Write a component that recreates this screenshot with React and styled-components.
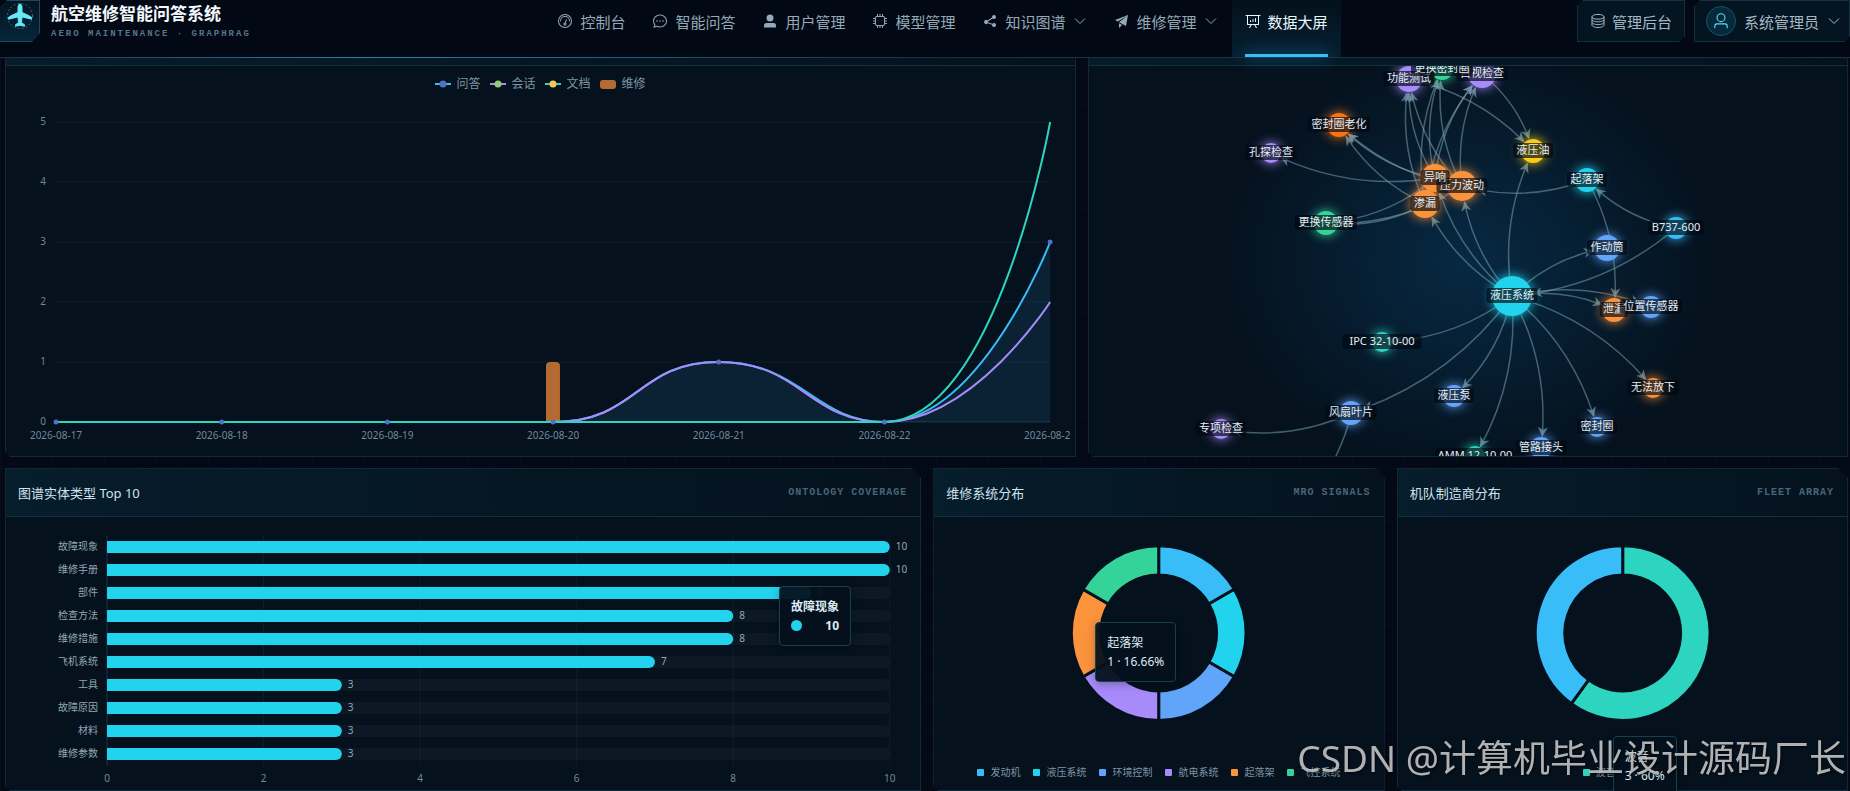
import React from "react";
import styled, { createGlobalStyle, css } from "styled-components";

const NAV = [
  { label: "控制台", icon: "odometer" },
  { label: "智能问答", icon: "chat" },
  { label: "用户管理", icon: "userFilled" },
  { label: "模型管理", icon: "cpu" },
  { label: "知识图谱", icon: "share", menu: true },
  { label: "维修管理", icon: "promotion", menu: true },
  { label: "数据大屏", icon: "board", active: true },
];

const ICONS = {
  odometer: [
    "M512 896a384 384 0 1 0 0-768 384 384 0 0 0 0 768m0 64a448 448 0 1 1 0-896 448 448 0 0 1 0 896",
    "M192 512a320 320 0 1 1 640 0 32 32 0 1 1-64 0 256 256 0 1 0-512 0 32 32 0 0 1-64 0",
    "M570.432 627.84A96 96 0 1 1 509.568 608l60.992-187.776A32 32 0 1 1 631.424 440l-60.992 187.776zM502.08 734.464a32 32 0 1 0 19.84-60.928 32 32 0 0 0-19.84 60.928",
  ],
  chat: [
    "m174.72 855.68 135.296-45.12 23.68 11.84C388.096 849.536 448.576 864 512 864c211.84 0 384-166.784 384-352S723.84 160 512 160 128 326.784 128 512c0 69.12 24.96 139.264 70.848 199.232l22.08 28.8-46.272 115.584zm-45.248 82.56A32 32 0 0 1 89.6 896l58.368-145.92C94.72 680.32 64 596.864 64 512 64 299.904 256 96 512 96s448 203.904 448 416-192 416-448 416a461.056 461.056 0 0 1-206.912-48.384l-175.616 58.56z",
    "M512 563.2a51.2 51.2 0 1 1 0-102.4 51.2 51.2 0 0 1 0 102.4m192 0a51.2 51.2 0 1 1 0-102.4 51.2 51.2 0 0 1 0 102.4m-384 0a51.2 51.2 0 1 1 0-102.4 51.2 51.2 0 0 1 0 102.4",
  ],
  userFilled: [
    "M288 320a224 224 0 1 0 448 0 224 224 0 1 0-448 0m544 608H160a32 32 0 0 1-32-32v-96a160 160 0 0 1 160-160h448a160 160 0 0 1 160 160v96a32 32 0 0 1-32 32z",
  ],
  cpu: [
    "M320 256a64 64 0 0 0-64 64v384a64 64 0 0 0 64 64h384a64 64 0 0 0 64-64V320a64 64 0 0 0-64-64zm0-64h384a128 128 0 0 1 128 128v384a128 128 0 0 1-128 128H320a128 128 0 0 1-128-128V320a128 128 0 0 1 128-128",
    "M480 64h64v160h-64zM640 64h64v160h-64zM320 64h64v160h-64zM480 800h64v160h-64zM640 800h64v160h-64zM320 800h64v160h-64zM64 480h160v64H64zM64 320h160v64H64zM64 640h160v64H64zM800 480h160v64H800zM800 320h160v64H800zM800 640h160v64H800z",
  ],
  share: [
    "m679.872 348.8-301.76 188.608a127.808 127.808 0 0 1 5.12 52.16l279.936 104.96a128 128 0 1 1-22.464 59.904l-279.872-104.96a128 128 0 1 1-16.64-166.272l301.696-188.608a128 128 0 1 1 33.92 54.272z",
  ],
  promotion: [
    "m64 448 832-320-128 704-446.08-243.328L832 192 242.816 545.536zm256 512V657.024L512 768z",
  ],
  board: [
    "m665.216 768 110.848 192h-73.856L591.36 768H433.024L322.176 960H248.32l110.848-192H160a32 32 0 0 1-32-32V192H64a32 32 0 0 1 0-64h896a32 32 0 1 1 0 64h-64v544a32 32 0 0 1-32 32zM832 192H192v512h640zM352 448a32 32 0 0 1 32 32v64a32 32 0 0 1-64 0v-64a32 32 0 0 1 32-32m160-64a32 32 0 0 1 32 32v128a32 32 0 0 1-64 0V416a32 32 0 0 1 32-32m160-64a32 32 0 0 1 32 32v192a32 32 0 1 1-64 0V352a32 32 0 0 1 32-32",
  ],
  user: [
    "M512 512a192 192 0 1 0 0-384 192 192 0 0 0 0 384m0 64a256 256 0 1 1 0-512 256 256 0 0 1 0 512m320 320v-96a96 96 0 0 0-96-96H288a96 96 0 0 0-96 96v96a32 32 0 1 1-64 0v-96a160 160 0 0 1 160-160h448a160 160 0 0 1 160 160v96a32 32 0 1 1-64 0",
  ],
};

const DATES = [
  "2026-08-17",
  "2026-08-18",
  "2026-08-19",
  "2026-08-20",
  "2026-08-21",
  "2026-08-22",
  "2026-08-23",
];

const SERIES = [
  { name: "问答", color: "#38bdf8", dot: "#5470c6", data: [0, 0, 0, 0, 1, 0, 3] },
  { name: "会话", color: "#a78bfa", dot: "#91cc75", data: [0, 0, 0, 0, 1, 0, 2] },
  { name: "文档", color: "#2dd4bf", dot: "#fac858", data: [0, 0, 0, 0, 0, 0, 5] },
];

const ENTITIES = [
  ["故障现象", 10],
  ["维修手册", 10],
  ["部件", 9],
  ["检查方法", 8],
  ["维修措施", 8],
  ["飞机系统", 7],
  ["工具", 3],
  ["故障原因", 3],
  ["材料", 3],
  ["维修参数", 3],
];

const SYSTEMS = [
  { name: "发动机", value: 1, color: "#38bdf8" },
  { name: "液压系统", value: 1, color: "#22d3ee" },
  { name: "环境控制", value: 1, color: "#60a5fa" },
  { name: "航电系统", value: 1, color: "#a78bfa" },
  { name: "起落架", value: 1, color: "#fb923c" },
  { name: "飞控系统", value: 1, color: "#34d399" },
];

const MAKERS = [
  { name: "波音", value: 3, color: "#2dd4bf" },
  { name: "空客", value: 2, color: "#38bdf8" },
];

// id: [label, x, y, radius, color]
const NODES = {
  test: ["功能测试", 1409, 79, 13, "#a78bfa"],
  visual: ["目视检查", 1482, 74, 14, "#a78bfa"],
  seal: ["更换密封圈", 1442, 69, 11, "#34d399"],
  aging: ["密封圈老化", 1339, 125, 12, "#f97316"],
  bore: ["孔探检查", 1271, 153, 10, "#a78bfa"],
  pressure: ["压力波动", 1462, 186, 15, "#fb923c"],
  noise: ["异响", 1435, 178, 14, "#fb923c"],
  leak: ["渗漏", 1425, 204, 14, "#fb923c"],
  sensor: ["更换传感器", 1326, 223, 12, "#34d399"],
  oil: ["液压油", 1533, 151, 12, "#facc15"],
  gear: ["起落架", 1587, 180, 12, "#22d3ee"],
  b737: ["B737-600", 1676, 228, 11, "#38bdf8"],
  actuator: ["作动筒", 1607, 248, 13, "#60a5fa"],
  hub: ["液压系统", 1512, 296, 20, "#22d3ee"],
  seep: ["泄漏", 1614, 310, 12, "#fb923c"],
  position: ["位置传感器", 1651, 307, 11, "#60a5fa"],
  stuck: ["无法放下", 1653, 388, 10, "#fb923c"],
  ring: ["密封圈", 1597, 427, 10, "#60a5fa"],
  pipe: ["管路接头", 1541, 448, 11, "#60a5fa"],
  amm: ["AMM 12-10-00", 1475, 456, 10, "#2dd4bf"],
  pump: ["液压泵", 1454, 396, 11, "#60a5fa"],
  ipc: ["IPC 32-10-00", 1382, 342, 10, "#2dd4bf"],
  fan: ["风扇叶片", 1351, 413, 12, "#60a5fa"],
  special: ["专项检查", 1221, 429, 10, "#a78bfa"],
};

const EDGES = [
  ["hub", "oil"],
  ["hub", "actuator"],
  ["hub", "seep"],
  ["hub", "position"],
  ["hub", "stuck"],
  ["hub", "ring"],
  ["hub", "pipe"],
  ["hub", "amm"],
  ["hub", "pump"],
  ["hub", "ipc"],
  ["hub", "fan"],
  ["hub", "pressure"],
  ["hub", "leak"],
  ["hub", "noise"],
  ["b737", "hub"],
  ["b737", "gear"],
  ["gear", "seep"],
  ["gear", "pressure"],
  ["fan", "special"],
  ["noise", "bore"],
  ["noise", "aging"],
  ["pressure", "aging"],
  ["leak", "aging"],
  ["noise", "sensor"],
  ["pressure", "sensor"],
  ["leak", "sensor"],
  ["noise", "test"],
  ["pressure", "test"],
  ["leak", "test"],
  ["noise", "seal"],
  ["pressure", "seal"],
  ["leak", "seal"],
  ["noise", "visual"],
  ["pressure", "visual"],
  ["leak", "visual"],
  ["test", "oil"],
  ["visual", "oil"],
];

const Icon = ({ name, size = 16 }) => (
  <svg width={size} height={size} viewBox="0 0 1024 1024" fill="currentColor" aria-hidden="true">
    {ICONS[name].map((d) => (
      <path key={d} d={d} />
    ))}
  </svg>
);

const Chevron = () => (
  <svg width="14" height="14" viewBox="0 0 14 14" fill="none" stroke="currentColor" aria-hidden="true">
    <path d="M2 4.5 7 9.5 12 4.5" />
  </svg>
);

const Coins = () => (
  <svg width="16" height="16" viewBox="0 0 16 16" fill="none" stroke="currentColor" aria-hidden="true">
    <ellipse cx="8" cy="3.8" rx="6" ry="2.4" />
    <path d="M2 3.8v2.6c0 1.3 2.7 2.4 6 2.4s6-1.1 6-2.4V3.8M2 6.6v2.6c0 1.3 2.7 2.4 6 2.4s6-1.1 6-2.4V6.6M2 9.4v2.7c0 1.3 2.7 2.4 6 2.4s6-1.1 6-2.4V9.4" />
  </svg>
);

const PlaneLogo = () => (
  <svg width="30" height="30" viewBox="0 0 30 30" aria-hidden="true">
    <circle cx="15" cy="15" r="12.5" fill="none" stroke="#2c7484" strokeDasharray="2 2" />
    <path
      fill="#67e8f9"
      stroke="#67e8f9"
      strokeLinejoin="round"
      d="M15 3c1.300 0 2 1.600 2 3.200v5.200l8.600 4.200c.6.300.9.800.9 1.400v1.200L17 15.900l-.5 5.800 3 2v1.500L15 24.300l-4.500.9v-1.500l3-2-.5-5.800-9.500 2.300V17c0-.6.3-1.100.9-1.400l8.600-4.200V6.200C13 4.600 13.700 3 15 3z"
    />
  </svg>
);

const LineChart = () => {
  const step = 165.7;
  const px = (i) => 50 + i * step;
  const py = (v) => 332 - v * 60;

  const curve = (data) => {
    const len = (i) => Math.hypot(step, (data[i + 1] - data[i]) * 60);
    const last = data.length - 1;
    let d = `M${px(0)} ${py(data[0])}`;
    for (let i = 0; i < last; i++) {
      const out = i === 0 ? 0 : (step * len(i)) / (len(i) + len(i - 1));
      const into = i + 1 === last ? 0 : (step * len(i)) / (len(i) + len(i + 1));
      d += `C${px(i) + out} ${py(data[i])} ${px(i + 1) - into} ${py(data[i + 1])} ${px(i + 1)} ${py(data[i + 1])}`;
    }
    return d;
  };

  return (
    <Chart viewBox="0 0 1064 366" role="img" aria-label="问答、会话、文档、维修趋势">
      {[0, 1, 2, 3, 4, 5].map((v) => (
        <g key={v}>
          <GridLine x1={px(0)} x2={px(6)} y1={py(v)} y2={py(v)} $strong={v === 0} />
          <AxisText x="40" y={py(v) + 3} textAnchor="end">
            {v}
          </AxisText>
        </g>
      ))}
      <path d={`${curve(SERIES[0].data)}V332H50Z`} fill="#38bdf8" fillOpacity="0.1" />
      <path d="M540 332V276a4 4 0 0 1 4-4h6a4 4 0 0 1 4 4v56z" fill="#b36a33" />
      {SERIES.map((s) => (
        <path key={s.name} d={curve(s.data)} fill="none" stroke={s.color} strokeWidth="2" />
      ))}
      {SERIES[0].data.map((v, i) => (
        <circle key={i} cx={px(i)} cy={py(v)} r="2.5" fill={SERIES[0].dot} />
      ))}
      {DATES.map((d, i) => (
        <AxisText key={d} x={px(i)} y="349" textAnchor="middle">
          {d}
        </AxisText>
      ))}
    </Chart>
  );
};

const BarChart = () => {
  const unit = 78.25;
  return (
    <Chart viewBox="0 0 914 273" role="img" aria-label="图谱实体类型数量">
      {[0, 2, 4, 6, 8, 10].map((v) => (
        <g key={v}>
          <GridLine x1={101 + v * unit} x2={101 + v * unit} y1="19" y2="249" $strong={v === 0} />
          <AxisText x={101 + v * unit} y="265" textAnchor="middle">
            {v}
          </AxisText>
        </g>
      ))}
      {ENTITIES.map(([name, value], i) => {
        const y = 24 + i * 23;
        const end = 101 + value * unit;
        return (
          <g key={name}>
            <rect x="101" y={y} width={unit * 10} height="12" rx="5" fill="#94a3b8" fillOpacity="0.05" />
            <path d={`M101 ${y}H${end - 6}a6 6 0 0 1 0 12H101z`} fill="#22d3ee" />
            <AxisText x="92" y={y + 9} textAnchor="end" $bright>
              {name}
            </AxisText>
            <AxisText x={end + 6} y={y + 9} $bright>
              {value}
            </AxisText>
          </g>
        );
      })}
    </Chart>
  );
};

const Donut = ({ data, label }) => {
  const total = data.reduce((sum, d) => sum + d.value, 0);
  const point = (r, a) => `${225 + r * Math.sin(a)} ${116 + -r * Math.cos(a)}`;
  let angle = 0;
  return (
    <DonutSvg viewBox="0 0 450 249" role="img" aria-label={label}>
      {data.map((d) => {
        const from = angle;
        angle += (d.value / total) * Math.PI * 2;
        const large = angle - from > Math.PI ? 1 : 0;
        return (
          <path
            key={d.name}
            d={`M${point(87.5, from)}A87.5 87.5 0 ${large} 1 ${point(87.5, angle)}L${point(58, angle)}A58 58 0 ${large} 0 ${point(58, from)}Z`}
            fill={d.color}
            stroke="#05111d"
            strokeWidth="3"
          />
        );
      })}
    </DonutSvg>
  );
};

// Trims the quadratic curve where it enters the target node.
const edgePath = ([a, b]) => {
  const [, x1, y1] = NODES[a];
  const [, x2, y2, r] = NODES[b];
  const cx = (x1 + x2) / 2 - (y1 - y2) * 0.16;
  const cy = (y1 + y2) / 2 - (x2 - x1) * 0.16;
  let t = 1;
  let x = x2;
  let y = y2;
  while (t > 0 && Math.hypot(x - x2, y - y2) < r + 1) {
    t -= 0.005;
    x = (1 - t) ** 2 * x1 + 2 * (1 - t) * t * cx + t * t * x2;
    y = (1 - t) ** 2 * y1 + 2 * (1 - t) * t * cy + t * t * y2;
  }
  return `M${x1} ${y1}Q${x1 + (cx - x1) * t} ${y1 + (cy - y1) * t} ${x} ${y}`;
};

const labelWidth = (text) => (/^[A-Z]/.test(text) ? text.length * 6 : text.length * 11) + 7;

const GraphChart = () => (
  <Chart viewBox="1089 66 758 390" role="img" aria-label="知识图谱关系">
    <defs>
      <radialGradient id="glow">
        <stop offset="0" stopColor="#0a4a78" stopOpacity="0.42" />
        <stop offset="1" stopColor="#0a4a78" stopOpacity="0" />
      </radialGradient>
      <marker id="arrow" viewBox="0 0 10 10" refX="9" refY="5" markerWidth="10" markerHeight="10" markerUnits="userSpaceOnUse" orient="auto">
        <path d="M0 0 10 5 0 10 3 5z" fill="#6f95a3" fillOpacity="0.75" />
      </marker>
    </defs>
    <ellipse cx="1468" cy="261" rx="250" ry="215" fill="url(#glow)" />
    <g fill="none" stroke="#7fa9b8" strokeOpacity="0.5" strokeWidth="1.5">
      {EDGES.map((edge) => (
        <path key={edge.join()} d={edgePath(edge)} markerEnd="url(#arrow)" />
      ))}
      <path d="M1351 413Q1347 434 1334 460" />
    </g>
    {Object.values(NODES).map(([name, x, y, r, color]) => (
      <GraphNode key={name} cx={x} cy={y} r={r} fill={color} $glow={color} />
    ))}
    {Object.values(NODES).map(([name, x, y]) => (
      <g key={name}>
        <rect x={x - labelWidth(name) / 2} y={y - 8} width={labelWidth(name)} height="15" rx="3" fill="#020812" fillOpacity="0.68" />
        <NodeText x={x} y={y + 3} textAnchor="middle">
          {name}
        </NodeText>
      </g>
    ))}
  </Chart>
);

const Panel = ({ title, tag, children }) => (
  <PanelBox>
    <PanelHead>
      <h2>{title}</h2>
      <span>{tag}</span>
    </PanelHead>
    {children}
  </PanelBox>
);

const App = () => {
  return (
    <>
      <GlobalStyle />
      <Header>
        <Brand href="#home">
          <LogoBox>
            <PlaneLogo />
          </LogoBox>
          <BrandText>
            <strong>航空维修智能问答系统</strong>
            <small>AERO MAINTENANCE · GRAPHRAG</small>
          </BrandText>
        </Brand>
        <Nav>
          {NAV.map((item) => (
            <NavLink key={item.label} href="#nav" $active={item.active}>
              <Icon name={item.icon} />
              {item.label}
              {item.menu && <Chevron />}
            </NavLink>
          ))}
        </Nav>
        <Actions>
          <HeaderButton type="button">
            <Coins />
            管理后台
          </HeaderButton>
          <HeaderButton type="button" $last>
            <Avatar>
              <Icon name="user" size={18} />
            </Avatar>
            系统管理员
            <Chevron />
          </HeaderButton>
        </Actions>
      </Header>

      <Main>
        <TopRow>
          <PanelBox>
            <HeadStrip />
            <Legend $top>
              {SERIES.map((s) => (
                <li key={s.name}>
                  <svg width="16" height="10" viewBox="0 0 16 10" aria-hidden="true">
                    <path d="M0 5h16" stroke={s.color} strokeWidth="2" />
                    <circle cx="8" cy="5" r="3.5" fill={s.dot} />
                  </svg>
                  {s.name}
                </li>
              ))}
              <li>
                <BarKey />
                维修
              </li>
            </Legend>
            <LineArea>
              <LineChart />
            </LineArea>
          </PanelBox>
          <PanelBox>
            <HeadStrip />
            <GraphChart />
          </PanelBox>
        </TopRow>

        <BottomRow>
          <Panel title="图谱实体类型 Top 10" tag="ONTOLOGY COVERAGE">
            <BarChart />
            <Tooltip $left="773px" $top="117px">
              <b>故障现象</b>
              <TipValue>
                <i />
                <strong>10</strong>
              </TipValue>
            </Tooltip>
          </Panel>
          <Panel title="维修系统分布" tag="MRO SIGNALS">
            <Donut data={SYSTEMS} label="维修系统分布" />
            <PieLegend data={SYSTEMS} />
            <Tooltip $left="161px" $top="153px">
              <span>起落架</span>
              <span>1 · 16.66%</span>
            </Tooltip>
          </Panel>
          <Panel title="机队制造商分布" tag="FLEET ARRAY">
            <Donut data={MAKERS} label="机队制造商分布" />
            <PieLegend data={MAKERS} />
            <Tooltip $left="215px" $top="267px">
              <span>波音</span>
              <span>3 · 60%</span>
            </Tooltip>
          </Panel>
        </BottomRow>
      </Main>
      <Watermark>CSDN @计算机毕业设计源码厂长</Watermark>
    </>
  );
};

const PieLegend = ({ data }) => (
  <Legend>
    {data.map((d) => (
      <li key={d.name}>
        <Swatch $color={d.color} />
        {d.name}
      </li>
    ))}
  </Legend>
);

const GlobalStyle = createGlobalStyle`
  * {
    box-sizing: border-box;
  }

  body {
    margin: 0;
    overflow: hidden;
    color: #d5e6f0;
    background-color: #030a16;
    background-image: linear-gradient(rgba(34, 150, 190, 0.03) 1px, transparent 1px),
      linear-gradient(90deg, rgba(34, 150, 190, 0.03) 1px, transparent 1px);
    background-size: 26px 26px;
    font-family: "Noto Sans", "Noto Sans CJK SC", sans-serif;
  }
`;

const Header = styled.header`
  position: relative;
  z-index: 2;
  display: flex;
  align-items: flex-start;
  height: 58px;
  background: #030914;
  border-bottom: 1px solid #173243;

  &::after {
    content: "";
    position: absolute;
    left: 0;
    bottom: -1px;
    width: 50%;
    height: 1px;
    background: linear-gradient(90deg, transparent, #2b7fae 40%, transparent);
  }
`;

const Brand = styled.a`
  display: flex;
  gap: 11px;
  min-width: 308px;
  color: inherit;
  text-decoration: none;
`;

const LogoBox = styled.span`
  display: flex;
  justify-content: center;
  width: 40px;
  height: 42px;
  border: 1px solid #1b4a5c;
  border-width: 1px 1px 1px 0;
  background: linear-gradient(180deg, #061521, #06263a);
  clip-path: polygon(7px 0, 100% 0, 100% 33px, 32px 100%, 0 100%, 0 7px);
`;

const BrandText = styled.span`
  display: flex;
  flex-direction: column;
  gap: 2px;
  padding-top: 2px;
  white-space: nowrap;

  strong {
    font-size: 17px;
    line-height: 24px;
    color: #f3faff;
  }

  small {
    font-family: "Liberation Mono", monospace;
    font-size: 9px;
    font-weight: 700;
    line-height: 12px;
    letter-spacing: 2px;
    color: #54758a;
  }
`;

const Nav = styled.nav`
  display: flex;
  flex: 1;
  justify-content: center;
  gap: 1px;
`;

const NavLink = styled.a`
  position: relative;
  display: flex;
  align-items: center;
  gap: 7px;
  height: 57px;
  padding: 0 13px 15px;
  font-size: 15px;
  white-space: nowrap;
  color: #93a9b8;
  text-decoration: none;

  ${({ $active }) =>
    $active &&
    css`
      color: #eaf6fd;
      background: linear-gradient(180deg, #04101c, #061f30);

      &::after {
        content: "";
        position: absolute;
        left: 13px;
        right: 13px;
        bottom: 0;
        height: 3px;
        background: #38bdf8;
        box-shadow: 0 0 16px #1c8fc8;
      }
    `}
`;

const Actions = styled.div`
  display: flex;
  gap: 9px;
`;

const HeaderButton = styled.button`
  display: flex;
  align-items: center;
  gap: 6px;
  height: 42px;
  padding: 0 12px;
  border: 1px solid #14303f;
  background: #051421;
  color: #a4b8c6;
  font-family: inherit;
  font-size: 15px;
  white-space: nowrap;
  clip-path: polygon(6px 0, 100% 0, 100% calc(100% - 6px), calc(100% - 6px) 100%, 0 100%, 0 6px);

  ${({ $last }) =>
    $last &&
    css`
      gap: 8px;
      padding: 0 8px 0 11px;
    `}
`;

const Avatar = styled.span`
  display: grid;
  place-items: center;
  width: 30px;
  height: 30px;
  border: 1px solid #16536b;
  border-radius: 50%;
  background: #062a3c;
  color: #5fdcf0;
`;

const Main = styled.main`
  display: flex;
  flex-direction: column;
  gap: 11px;
  padding: 0 2px 0 5px;
`;

const TopRow = styled.section`
  display: grid;
  grid-template-columns: 1.55fr 1.1fr;
  gap: 12px;
`;

const BottomRow = styled.section`
  display: grid;
  grid-template-columns: 2.03fr 1fr 1fr;
  gap: 12px;
`;

const PanelBox = styled.article`
  position: relative;
  min-width: 0;
  border: 1px solid #10293a;
  background: #05111d;
  clip-path: polygon(0 0, calc(100% - 10px) 0, 100% 10px, 100% 100%, 5px 100%, 0 calc(100% - 5px));

  ${TopRow} & {
    border-top: 0;
    clip-path: polygon(0 0, 100% 0, 100% 100%, 5px 100%, 0 calc(100% - 5px));
  }
`;

const HeadStrip = styled.div`
  height: 8px;
  border-bottom: 1px solid #12303f;
  background: linear-gradient(90deg, #061c2a, #05121e);
`;

const PanelHead = styled.header`
  display: flex;
  align-items: center;
  justify-content: space-between;
  height: 48px;
  padding: 0 13px 0 12px;
  border-bottom: 1px solid #12303f;
  background: linear-gradient(90deg, #061d2b, #05121e);
  white-space: nowrap;

  h2 {
    margin: 0;
    font-size: 13px;
    font-weight: 400;
    color: #cfe3ee;
  }

  span {
    font-family: "Liberation Mono", monospace;
    font-size: 10px;
    font-weight: 700;
    letter-spacing: 1px;
    color: #486679;
  }
`;

const Legend = styled.ul`
  display: flex;
  justify-content: center;
  gap: 13px;
  margin: 0;
  padding: 0 0 12px;
  list-style: none;
  font-size: 10px;
  line-height: 12px;
  color: #7f95a5;

  li {
    display: flex;
    align-items: center;
    gap: 6px;
    white-space: nowrap;
  }

  ${({ $top }) =>
    $top &&
    css`
      gap: 10px;
      padding: 12px 0 0;
      font-size: 12px;

      li {
        gap: 5px;
      }
    `}
`;

const BarKey = styled.span`
  width: 16px;
  height: 9px;
  border-radius: 3px;
  background: #b36a33;
`;

const Swatch = styled.span`
  width: 7px;
  height: 7px;
  border-radius: 1px;
  background: ${({ $color }) => $color};
`;

const LineArea = styled.div`
  padding-right: 5px;
`;

const Chart = styled.svg`
  display: block;
  width: 100%;
  height: auto;
`;

const DonutSvg = styled.svg`
  display: block;
  width: 100%;
  height: 249px;
`;

const GridLine = styled.line`
  stroke: ${({ $strong }) => ($strong ? "#1b3546" : "#0c1f2c")};
`;

const AxisText = styled.text`
  font-size: 10px;
  fill: ${({ $bright }) => ($bright ? "#91a7b5" : "#71899a")};
`;

const NodeText = styled.text`
  font-size: 11px;
  fill: #e2eef4;
`;

const GraphNode = styled.circle`
  filter: drop-shadow(0 0 6px ${({ $glow }) => $glow});
`;

const Tooltip = styled.div`
  position: absolute;
  left: ${({ $left }) => $left};
  top: ${({ $top }) => $top};
  display: flex;
  flex-direction: column;
  padding: 10px 11px;
  border: 1px solid #16404e;
  border-radius: 4px;
  background: rgba(4, 16, 28, 0.94);
  box-shadow: 1px 2px 10px rgba(0, 0, 0, 0.3);
  color: #dcecf5;
  font-size: 12px;
  line-height: 19px;
  white-space: nowrap;
`;

const TipValue = styled.div`
  display: flex;
  align-items: center;
  justify-content: space-between;

  i {
    width: 11px;
    height: 11px;
    border-radius: 50%;
    background: #22d3ee;
  }
`;

const Watermark = styled.div`
  position: fixed;
  right: 4px;
  bottom: 8px;
  z-index: 3;
  color: rgba(200, 200, 200, 0.88);
  font-size: 37px;
  line-height: 50px;
  white-space: nowrap;
  text-shadow: 1px 1px 2px rgba(0, 0, 0, 0.6);
  pointer-events: none;
`;

export default App;
